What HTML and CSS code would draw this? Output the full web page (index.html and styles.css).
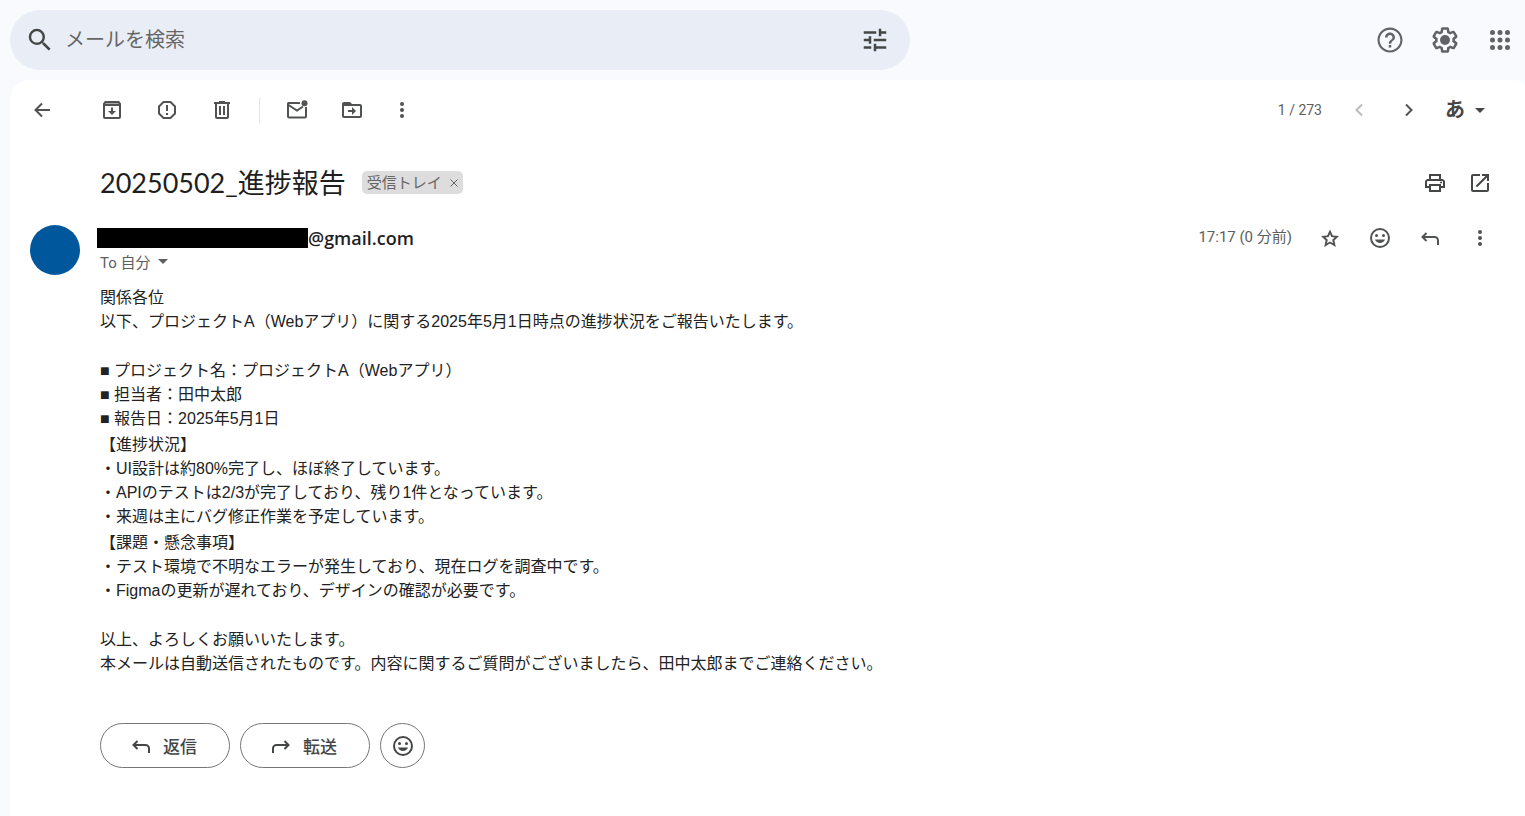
FILE: index.html
```
<!DOCTYPE html>
<html lang="ja">
<head>
  <meta charset="UTF-8">
  <title>20250502_進捗報告</title>
  <link rel="stylesheet" href="styles.css">
</head>
<body>
  <header class="header">
    <form class="search" role="search">
      <button type="button" class="icon-btn" aria-label="検索">
        <svg class="icon-lg" viewBox="0 0 24 24"><path d="M15.5 14h-.79l-.28-.27A6.471 6.471 0 0 0 16 9.5 6.5 6.5 0 1 0 9.5 16c1.61 0 3.09-.59 4.23-1.57l.27.28v.79l5 4.99L20.49 19l-4.99-5zm-6 0C7.01 14 5 11.99 5 9.5S7.01 5 9.5 5 14 7.01 14 9.5 11.99 14 9.5 14z"/></svg>
      </button>
      <input type="text" class="search-input" placeholder="メールを検索" aria-label="メールを検索">
      <button type="button" class="icon-btn" aria-label="検索オプション">
        <svg class="icon-lg" viewBox="0 0 24 24"><path d="M3 17v2h6v-2H3zM3 5v2h10V5H3zm10 16v-2h8v-2h-8v-2h-2v6h2zM7 9v2H3v2h4v2h2V9H7zm14 4v-2H11v2h10zm-6-4h2V7h4V5h-4V3h-2v6z"/></svg>
      </button>
    </form>
    <div class="header-tools">
      <button type="button" aria-label="サポート">
        <svg class="icon-lg" viewBox="0 0 24 24"><path d="M11 18h2v-2h-2v2zm1-16C6.48 2 2 6.48 2 12s4.48 10 10 10 10-4.48 10-10S17.52 2 12 2zm0 18.300c-4.600 0-8.300-3.700-8.300-8.300S7.400 3.700 12 3.700s8.300 3.700 8.300 8.300-3.700 8.300-8.300 8.300zM12 6c-2.210 0-4 1.790-4 4h2c0-1.100.9-2 2-2s2 .9 2 2c0 2-3 1.750-3 5h2c0-2.250 3-2.500 3-5 0-2.210-1.790-4-4-4z"/></svg>
      </button>
      <button type="button" aria-label="設定">
        <svg class="icon-lg" viewBox="0 0 24 24"><path d="M13.850 22.250h-3.700c-.74 0-1.360-.54-1.450-1.270l-.27-1.890c-.27-.14-.53-.29-.79-.46l-1.800.72c-.7.26-1.470-.03-1.810-.65L2.200 15.530c-.35-.66-.2-1.440.36-1.880l1.530-1.190c-.01-.15-.02-.3-.02-.46 0-.15.01-.31.02-.46l-1.520-1.190c-.59-.45-.74-1.260-.37-1.880l1.850-3.190c.34-.62 1.110-.9 1.790-.63l1.810.73c.26-.17.52-.32.78-.46l.27-1.910c.09-.7.71-1.250 1.440-1.250h3.700c.74 0 1.360.54 1.450 1.270l.27 1.890c.27.14.53.29.79.46l1.800-.72c.71-.26 1.480.03 1.820.65l1.840 3.180c.36.66.2 1.440-.36 1.880l-1.520 1.190c.01.15.02.3.02.46s-.01.31-.02.46l1.520 1.190c.56.45.72 1.230.37 1.860l-1.860 3.220c-.34.62-1.110.9-1.800.63l-1.800-.72c-.26.17-.52.32-.78.46l-.27 1.910c-.1.680-.72 1.220-1.460 1.220zm-3.230-2h2.760l.37-2.550.53-.22c.44-.18.88-.44 1.340-.78l.45-.34 2.380.96 1.380-2.400-2.030-1.580.07-.56c.03-.26.06-.51.06-.78s-.03-.53-.06-.78l-.07-.56 2.030-1.580-1.390-2.400-2.390.96-.45-.35c-.42-.32-.87-.58-1.330-.77l-.52-.22-.37-2.550h-2.760l-.37 2.550-.53.21c-.44.19-.88.44-1.340.79l-.45.33-2.380-.95-1.390 2.390 2.030 1.580-.07.56a7 7 0 0 0-.06.79c0 .26.02.53.06.78l.07.56-2.030 1.580 1.380 2.400 2.390-.96.45.35c.43.33.86.58 1.330.77l.53.22.38 2.550z"/><circle cx="12" cy="12" r="4"/></svg>
      </button>
      <button type="button" aria-label="アプリ">
        <svg class="icon-lg" viewBox="0 0 24 24"><path d="M6 8a2 2 0 1 0 0-4 2 2 0 0 0 0 4zm6 0a2 2 0 1 0 0-4 2 2 0 0 0 0 4zm6 0a2 2 0 1 0 0-4 2 2 0 0 0 0 4zM6 14a2 2 0 1 0 0-4 2 2 0 0 0 0 4zm6 0a2 2 0 1 0 0-4 2 2 0 0 0 0 4zm6 0a2 2 0 1 0 0-4 2 2 0 0 0 0 4zM6 20a2 2 0 1 0 0-4 2 2 0 0 0 0 4zm6 0a2 2 0 1 0 0-4 2 2 0 0 0 0 4zm6 0a2 2 0 1 0 0-4 2 2 0 0 0 0 4z"/></svg>
      </button>
    </div>
  </header>

  <main class="panel">
    <div class="toolbar">
      <button type="button" class="icon-btn back" aria-label="戻る">
        <svg class="icon" viewBox="0 0 24 24"><path class="line" d="M12 5.500 5.500 12l6.500 6.500M5.500 12H20"/></svg>
      </button>
      <div class="toolbar-actions">
        <button type="button" class="icon-btn" aria-label="アーカイブ">
          <svg class="icon" viewBox="0 0 24 24"><path d="M19 3H5L3 5.500V19c0 1.100.9 2 2 2h14c1.100 0 2-.9 2-2V5.500L19 3zm0 16H5V8h14v11z"/><path d="M11 9.500v3.500H8l4 4 4-4h-3V9.500z"/><path class="shade" d="M5.500 5h13v1h-13z"/></svg>
        </button>
        <button type="button" class="icon-btn" aria-label="迷惑メールを報告">
          <svg class="icon" viewBox="0 0 24 24"><path class="line" d="M8.500 4h7L20 8.500v7L15.500 20h-7L4 15.500v-7z"/><path d="M11 7h2v6h-2zM11 15h2v2h-2z"/></svg>
        </button>
        <button type="button" class="icon-btn" aria-label="削除">
          <svg class="icon" viewBox="0 0 24 24"><path d="M15 4V3H9v1H4v2h1v13c0 1.100.9 2 2 2h10c1.100 0 2-.9 2-2V6h1V4h-5zm2 15H7V6h10v13zM9 8h2v9H9zm4 0h2v9h-2z"/></svg>
        </button>
        <span class="divider"></span>
        <button type="button" class="icon-btn" aria-label="未読にする">
          <svg class="icon" viewBox="0 0 24 24"><path class="line" d="M15 5H3.500a.5.5 0 0 0-.5.5v13a1 1 0 0 0 1 1h16a1 1 0 0 0 1-1V9M3.500 7 12 12.500l6-4"/><circle cx="19.500" cy="5.200" r="3"/></svg>
        </button>
        <button type="button" class="icon-btn" aria-label="移動">
          <svg class="icon" viewBox="0 0 24 24"><path d="M20 6h-8l-2-2H4c-1.100 0-2 .9-2 2v12c0 1.100.9 2 2 2h16c1.100 0 2-.9 2-2V8c0-1.100-.9-2-2-2zm0 12H4V8h16v10z"/><path d="M3 5h7l2 2H3zM12 9v3H8v2h4v3l4-4z"/></svg>
        </button>
        <button type="button" class="icon-btn narrow" aria-label="その他">
          <svg class="icon" viewBox="0 0 24 24"><circle cx="12" cy="6" r="2"/><circle cx="12" cy="12" r="2"/><circle cx="12" cy="18" r="2"/></svg>
        </button>
      </div>
      <div class="pager">
        <span class="count">1 / 273</span>
        <button type="button" class="icon-btn" aria-label="新しい" disabled>
          <svg class="icon" viewBox="0 0 24 24"><path class="line" d="m15 6.500-5.500 5.500 5.500 5.500"/></svg>
        </button>
        <button type="button" class="icon-btn" aria-label="古い">
          <svg class="icon" viewBox="0 0 24 24"><path class="line" d="m9 6.500 5.500 5.500L9 17.500"/></svg>
        </button>
        <button type="button" class="input-tool" aria-label="入力ツール">
          <span class="kana">あ</span>
          <svg class="caret" viewBox="0 0 10 5"><path d="M0 0h10L5 5z"/></svg>
        </button>
      </div>
    </div>

    <div class="subject">
      <h1>20250502_進捗報告</h1>
      <span class="label">受信トレイ
        <button type="button" aria-label="ラベルを削除">
          <svg viewBox="0 0 8 8"><path d="m.5.5 7 7m0-7-7 7"/></svg>
        </button>
      </span>
      <div class="subject-tools">
        <button type="button" class="icon-btn" aria-label="印刷">
          <svg class="icon" viewBox="0 0 24 24"><path d="M19 8h-1V3H6v5H5c-1.660 0-3 1.340-3 3v6h4v4h12v-4h4v-6c0-1.660-1.340-3-3-3zM8 5h8v3H8V5zm8 12v2H8v-4h8v2zm2-2v-2H6v2H4v-4c0-.55.45-1 1-1h14c.55 0 1 .45 1 1v4h-2z"/><circle cx="18" cy="11.500" r="1"/></svg>
        </button>
        <button type="button" class="icon-btn" aria-label="新しいウィンドウで開く">
          <svg class="icon" viewBox="0 0 24 24"><path d="M19 19H5V5h7V3H5a2 2 0 0 0-2 2v14a2 2 0 0 0 2 2h14c1.100 0 2-.9 2-2v-7h-2v7zM14 3v2h3.590l-9.830 9.830 1.410 1.410L19 6.410V10h2V3h-7z"/></svg>
        </button>
      </div>
    </div>

    <article class="message">
      <div class="avatar"></div>
      <div class="message-main">
        <div class="message-head">
          <div class="from">
            <div class="sender"><span class="masked"></span>@gmail.com</div>
            <button type="button" class="to">To 自分
              <svg class="caret" viewBox="0 0 10 5"><path d="M0 0h10L5 5z"/></svg>
            </button>
          </div>
          <span class="time">17:17 (0 分前)</span>
          <div class="message-tools">
            <button type="button" class="icon-btn" aria-label="スター">
              <svg class="icon" viewBox="0 0 24 24"><path d="m21 10-6.200-.6L12 3.500 9.200 9.400 3 10l4.600 4.400L6.200 21 12 17.600l5.800 3.400-1.400-6.600L21 10zm-9 5.500-3 1.800.8-3.500-2.500-2.300 3.400-.4L12 8l1.300 3.100 3.400.4-2.500 2.300.8 3.500-3-1.800z"/></svg>
            </button>
            <button type="button" class="icon-btn" aria-label="リアクションを追加">
              <svg class="icon" viewBox="0 0 24 24"><circle class="line" cx="12" cy="12" r="9"/><circle cx="8.500" cy="9.500" r="1.500"/><circle cx="15.500" cy="9.500" r="1.500"/><path d="M7 13.500h10c-.8 2.200-2.700 3.500-5 3.500s-4.200-1.300-5-3.500z"/></svg>
            </button>
            <button type="button" class="icon-btn" aria-label="返信">
              <svg class="icon" viewBox="0 0 24 24"><path class="line" d="m8.500 7-4 4 4 4M4.500 11h12a3.500 3.500 0 0 1 3.500 3.500V19"/></svg>
            </button>
            <button type="button" class="icon-btn" aria-label="その他">
              <svg class="icon" viewBox="0 0 24 24"><circle cx="12" cy="6" r="2"/><circle cx="12" cy="12" r="2"/><circle cx="12" cy="18" r="2"/></svg>
            </button>
          </div>
        </div>

        <div class="body">
          <p>関係各位<br>
          以下、プロジェクトA（Webアプリ）に関する2025年5月1日時点の進捗状況をご報告いたします。</p>
          <p class="section">■ プロジェクト名：プロジェクトA（Webアプリ）<br>
          ■ 担当者：田中太郎<br>
          ■ 報告日：2025年5月1日</p>
          <p class="section">【進捗状況】<br>
          ・UI設計は約80%完了し、ほぼ終了しています。<br>
          ・APIのテストは2/3が完了しており、残り1件となっています。<br>
          ・来週は主にバグ修正作業を予定しています。</p>
          <p>【課題・懸念事項】<br>
          ・テスト環境で不明なエラーが発生しており、現在ログを調査中です。<br>
          ・Figmaの更新が遅れており、デザインの確認が必要です。</p>
          <p>以上、よろしくお願いいたします。<br>
          本メールは自動送信されたものです。内容に関するご質問がございましたら、田中太郎までご連絡ください。</p>
        </div>

        <div class="reply-bar">
          <button type="button" class="pill">
            <svg class="icon" viewBox="0 0 24 24"><path class="line" d="m8.500 7-4 4 4 4M4.500 11h12a3.500 3.500 0 0 1 3.500 3.500V19"/></svg>
            返信
          </button>
          <button type="button" class="pill">
            <svg class="icon" viewBox="0 0 24 24"><path class="line" d="m15.500 7 4 4-4 4M19.500 11h-12A3.500 3.500 0 0 0 4 14.500V19"/></svg>
            転送
          </button>
          <button type="button" class="pill round" aria-label="リアクションを追加">
            <svg class="icon" viewBox="0 0 24 24"><circle class="line" cx="12" cy="12" r="9"/><circle cx="8.500" cy="9.500" r="1.500"/><circle cx="15.500" cy="9.500" r="1.500"/><path d="M7 13.500h10c-.8 2.200-2.700 3.500-5 3.500s-4.200-1.300-5-3.500z"/></svg>
          </button>
        </div>
      </div>
    </article>
  </main>
</body>
</html>
```
FILE: styles.css
```
/* GERAL */
* {
  box-sizing: border-box;
}

body {
  margin: 0;
  min-height: 100vh;
  display: flex;
  flex-direction: column;
  background: #f8fafe;
  color: #222;
  font-family: Roboto, "Noto Sans CJK JP", sans-serif;
  font-size: 15px;
}

button {
  display: flex;
  align-items: center;
  justify-content: center;
  padding: 0;
  border: none;
  background: none;
  color: #444746;
  font: inherit;
  cursor: pointer;
}

svg {
  display: block;
  flex-shrink: 0;
  fill: currentColor;
}

.icon {
  width: 24px;
  height: 24px;
}

.icon-lg {
  width: 30px;
  height: 30px;
}

.line {
  fill: none;
  stroke: currentColor;
  stroke-width: 2;
}

.shade {
  fill: #aaa;
}

.icon-btn {
  width: 40px;
  height: 40px;
}

.narrow {
  width: 30px;
}

.caret {
  width: 10px;
  height: 5px;
}

/* HEADER */
.header {
  display: flex;
  align-items: center;
  justify-content: space-between;
  gap: 20px;
  padding: 10px;
}

.search {
  flex: 1;
  max-width: 900px;
  height: 60px;
  display: flex;
  align-items: center;
  padding: 0 15px 0 10px;
  border-radius: 30px;
  background: #e9eef6;
}

.search-input {
  flex: 1;
  min-width: 0;
  padding: 0 5px 3px;
  border: none;
  outline: none;
  background: none;
  font-family: "Noto Sans CJK JP", sans-serif;
  font-size: 20px;
}

.search-input::placeholder {
  color: #666;
}

.header-tools {
  display: flex;
  gap: 25px;
}

.header-tools button {
  color: #5f6368;
}

/* PANEL */
.panel {
  flex: 1;
  margin-left: 10px;
  padding: 0 25px 0 12px;
  border-radius: 20px 12px 0 0 / 20px 6px 0 0;
  background: #fff;
}

.toolbar {
  height: 60px;
  display: flex;
  align-items: center;
}

.toolbar .icon-btn,
.message-tools .icon-btn {
  color: #505352;
}

.toolbar-actions {
  display: flex;
  align-items: center;
  gap: 15px;
  margin-left: 30px;
}

.divider {
  width: 1px;
  height: 25px;
  margin: 0 2px;
  background: #e4e4e4;
}

.pager {
  display: flex;
  align-items: center;
  gap: 10px;
  margin-left: auto;
  color: #5e5e5e;
}

.count {
  margin-right: 7px;
  font-size: 14px;
}

.toolbar .icon-btn:disabled {
  color: #bbb;
}

.input-tool {
  gap: 10px;
  padding: 0 15px 0 6px;
}

.kana {
  font-size: 20px;
  font-weight: 700;
  line-height: 30px;
}

/* SUBJECT */
.subject {
  display: flex;
  align-items: center;
  height: 45px;
  margin-top: 20px;
  padding-left: 78px;
}

h1 {
  margin: 0;
  color: #1f1f1f;
  font-family: Lato, "Noto Sans CJK JP", sans-serif;
  font-size: 27px;
  font-weight: 400;
  line-height: 36px;
}

.label {
  display: flex;
  align-items: center;
  gap: 8px;
  height: 23px;
  margin-left: 16px;
  padding: 0 5px;
  border-radius: 5px;
  background: #ddd;
  color: #666;
  line-height: 20px;
}

.label svg {
  width: 8px;
  height: 8px;
  stroke: #666;
}

.subject-tools {
  display: flex;
  gap: 5px;
  margin-left: auto;
}

/* MESSAGE */
.message {
  display: flex;
  gap: 20px;
  margin-top: 20px;
  padding-left: 8px;
}

.avatar {
  flex-shrink: 0;
  width: 50px;
  height: 50px;
  border-radius: 50%;
  background: #00579c;
}

.message-main {
  flex: 1;
}

.message-head {
  display: flex;
  align-items: flex-start;
  height: 61px;
}

.sender {
  display: flex;
  align-items: center;
  height: 25px;
  color: #1f1f1f;
  font-family: "Open Sans", sans-serif;
  font-size: 18px;
  font-weight: 600;
  line-height: 22px;
}

.masked {
  width: 211px;
  height: 20px;
  margin-left: -3px;
  background: #000;
}

.to {
  gap: 7px;
  height: 22px;
  color: #5e5e5e;
}

.time {
  margin-left: auto;
  color: #5e5e5e;
  line-height: 24px;
}

.message-tools {
  display: flex;
  gap: 10px;
  margin-left: 18px;
}

.message-tools .icon-btn {
  height: 25px;
}

.body {
  font-family: "Liberation Sans", "Noto Sans CJK JP", sans-serif;
  font-size: 16px;
  line-height: 24px;
}

.body p {
  margin: 0 0 25px;
}

.body .section {
  margin-bottom: 2px;
}

/* REPLY */
.reply-bar {
  display: flex;
  gap: 10px;
  margin-top: 47px;
}

.pill {
  gap: 10px;
  width: 130px;
  height: 45px;
  padding-right: 4px;
  border: 1px solid #747775;
  border-radius: 23px;
  font-size: 17px;
  font-weight: 500;
}

.round {
  width: 45px;
  padding: 0;
}
```
